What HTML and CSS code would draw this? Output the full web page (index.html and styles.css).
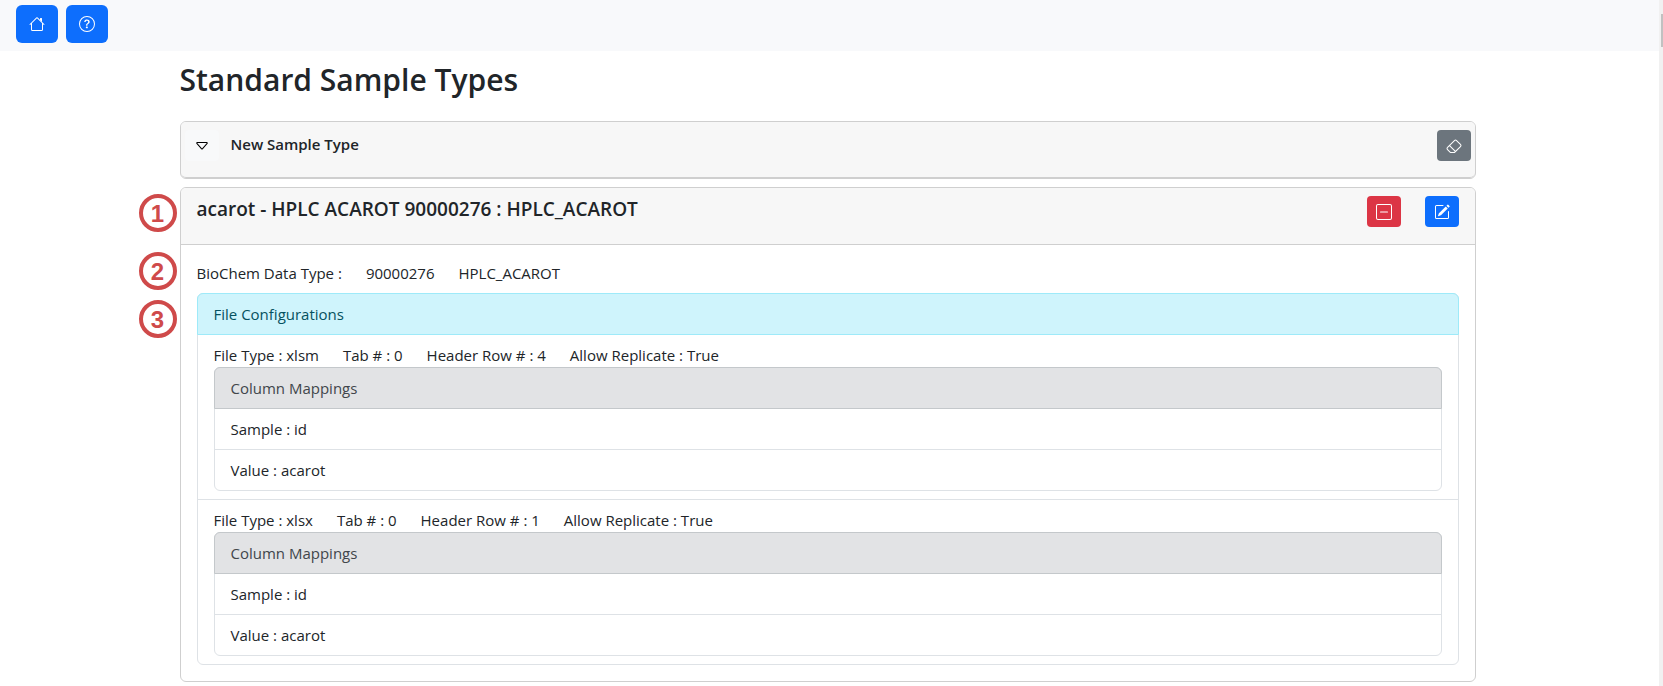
FILE: index.html
```html
<!DOCTYPE html>
<html lang="en">
<head>
<meta charset="utf-8">
<title>Standard Sample Types</title>
<link rel="stylesheet" href="styles.css">
</head>
<body>
<div class="page">
  <nav class="topbar">
    <button class="btn btn-primary" type="button" aria-label="Home">
      <svg class="icon" viewBox="0 0 16 16"><path d="M2 13.5V7h1v6.5a.5.5 0 0 0 .5.5h9a.5.5 0 0 0 .5-.5V7h1v6.5a1.5 1.5 0 0 1-1.5 1.5h-9A1.5 1.5 0 0 1 2 13.5zm11-11V6l-2-2V2.5a.5.5 0 0 1 .5-.5h1a.5.5 0 0 1 .5.5z"/><path d="M7.293 1.5a1 1 0 0 1 1.414 0l6.647 6.646a.5.5 0 0 1-.708.708L8 2.207 1.354 8.854a.5.5 0 1 1-.708-.708L7.293 1.5z"/></svg>
    </button>
    <button class="btn btn-primary" type="button" aria-label="Help">
      <svg class="icon" viewBox="0 0 16 16"><path d="M8 15A7 7 0 1 1 8 1a7 7 0 0 1 0 14zm0 1A8 8 0 1 0 8 0a8 8 0 0 0 0 16z"/><path d="M5.255 5.786a.237.237 0 0 0 .241.247h.825c.138 0 .248-.113.266-.25.09-.656.54-1.134 1.342-1.134.686 0 1.314.343 1.314 1.168 0 .635-.374.927-.965 1.371-.673.489-1.206 1.06-1.168 1.987l.003.217a.25.25 0 0 0 .25.246h.811a.25.25 0 0 0 .25-.25v-.105c0-.718.273-.927 1.01-1.486.609-.463 1.244-.977 1.244-2.056 0-1.511-1.276-2.241-2.673-2.241-1.267 0-2.655.59-2.75 2.286zm1.557 5.763c0 .533.425.927 1.01.927.609 0 1.028-.394 1.028-.927 0-.552-.42-.94-1.029-.94-.584 0-1.009.388-1.009.94z"/></svg>
    </button>
  </nav>

  <main class="container">
    <h2 class="title">Standard Sample Types</h2>

    <section class="card">
      <div class="card-header form-header">
        <button class="btn btn-sm btn-light" type="button" aria-label="Expand">
          <svg class="icon" viewBox="0 0 16 16"><path d="M3.204 5h9.592L8 10.481 3.204 5zm-.753.659 4.796 5.48a1 1 0 0 0 1.506 0l4.796-5.48c.566-.647.106-1.659-.753-1.659H3.204a1 1 0 0 0-.753 1.659z"/></svg>
        </button>
        <h6 class="form-title">New Sample Type</h6>
        <button class="btn btn-sm btn-secondary" type="button" aria-label="Clear">
          <svg class="icon" viewBox="0 0 16 16"><path d="M8.086 2.207a2 2 0 0 1 2.828 0l3.879 3.879a2 2 0 0 1 0 2.828l-5.5 5.5A2 2 0 0 1 7.879 15H5.12a2 2 0 0 1-1.414-.586l-2.5-2.5a2 2 0 0 1 0-2.828l6.879-6.879zm2.121.707a1 1 0 0 0-1.414 0L4.16 7.547l5.293 5.293 4.633-4.633a1 1 0 0 0 0-1.414l-3.879-3.879zM8.746 13.547 3.453 8.254 1.914 9.793a1 1 0 0 0 0 1.414l2.5 2.5a1 1 0 0 0 .707.293H7.88a1 1 0 0 0 .707-.293l.16-.16z"/></svg>
        </button>
      </div>
    </section>

    <section class="card">
      <div class="markers">
        <span class="marker">1</span>
        <span class="marker">2</span>
        <span class="marker">3</span>
      </div>
      <div class="card-header">
        <h5 class="card-title">acarot - HPLC ACAROT 90000276 : HPLC_ACAROT</h5>
        <div class="actions">
          <button class="btn btn-sm btn-danger" type="button" aria-label="Delete">
            <svg class="icon" viewBox="0 0 16 16"><path d="M14 1a1 1 0 0 1 1 1v12a1 1 0 0 1-1 1H2a1 1 0 0 1-1-1V2a1 1 0 0 1 1-1h12zM2 0a2 2 0 0 0-2 2v12a2 2 0 0 0 2 2h12a2 2 0 0 0 2-2V2a2 2 0 0 0-2-2H2z"/><path d="M4 8a.5.5 0 0 1 .5-.5h7a.5.5 0 0 1 0 1h-7A.5.5 0 0 1 4 8z"/></svg>
          </button>
          <button class="btn btn-sm btn-primary" type="button" aria-label="Edit">
            <svg class="icon" viewBox="0 0 16 16"><path d="M15.502 1.94a.5.5 0 0 1 0 .706L14.459 3.69l-2-2L13.502.646a.5.5 0 0 1 .707 0l1.293 1.293zm-1.75 2.456-2-2L4.939 9.21a.5.5 0 0 0-.121.196l-.805 2.414a.25.25 0 0 0 .316.316l2.414-.805a.5.5 0 0 0 .196-.12l6.813-6.814z"/><path fill-rule="evenodd" d="M1 13.5A1.5 1.5 0 0 0 2.5 15h11a1.5 1.5 0 0 0 1.5-1.5v-6a.5.5 0 0 0-1 0v6a.5.5 0 0 1-.5.5h-11a.5.5 0 0 1-.5-.5v-11a.5.5 0 0 1 .5-.5H9a.5.5 0 0 0 0-1H2.5A1.5 1.5 0 0 0 1 2.5v11z"/></svg>
          </button>
        </div>
      </div>
      <div class="card-body">
        <div class="facts">
          <span>BioChem Data Type :</span>
          <span>90000276</span>
          <span>HPLC_ACAROT</span>
        </div>
        <ul class="list">
          <li class="item item-info">File Configurations</li>
          <li class="item">
            <div class="facts">
              <span>File Type : xlsm</span>
              <span>Tab # : 0</span>
              <span>Header Row # : 4</span>
              <span>Allow Replicate : True</span>
            </div>
            <ul class="list">
              <li class="item item-secondary">Column Mappings</li>
              <li class="item">Sample : id</li>
              <li class="item">Value : acarot</li>
            </ul>
          </li>
          <li class="item">
            <div class="facts">
              <span>File Type : xlsx</span>
              <span>Tab # : 0</span>
              <span>Header Row # : 1</span>
              <span>Allow Replicate : True</span>
            </div>
            <ul class="list">
              <li class="item item-secondary">Column Mappings</li>
              <li class="item">Sample : id</li>
              <li class="item">Value : acarot</li>
            </ul>
          </li>
        </ul>
      </div>
    </section>
  </main>
</div>
<div class="scroll-track"><div class="scroll-thumb"></div></div>
</body>
</html>
```
FILE: styles.css
```css
*, *::before, *::after { box-sizing: border-box; }

body {
  display: flex;
  min-height: 100vh;
  margin: 0;
  background: #fff;
  color: #212529;
  font-family: "Segoe UI", "Open Sans", "Noto Sans", sans-serif;
  font-size: 15px;
  line-height: 24px;
}

h2, h5, h6, ul { margin: 0; padding: 0; }

.page { flex: 1; min-width: 0; }

.topbar {
  display: flex;
  gap: 8px;
  padding: 5px 16px 8px;
  background: #f8f9fb;
}

.btn {
  display: flex;
  align-items: center;
  justify-content: center;
  width: 42px;
  height: 38px;
  padding: 0;
  border: 0;
  border-radius: 6px;
  color: #fff;
}
.btn-sm { width: 34px; height: 31px; border-radius: 4px; }
.btn-primary { background: #0d6efd; }
.btn-secondary { background: #6c757d; }
.btn-danger { background: #dc3545; }
.btn-light { background: #f8f9fa; color: #000; }

.icon { width: 16px; height: 16px; fill: currentColor; }

.container {
  display: flex;
  flex-direction: column;
  gap: 8px;
  max-width: 1320px;
  margin: 0 auto;
  padding: 10px 14px 4px 10px;
}

.title {
  margin-bottom: 14px;
  font-size: 30px;
  font-weight: 600;
  line-height: 38px;
}

.card {
  position: relative;
  border: 1px solid #cfcfcf;
  border-radius: 6px;
}

.card-header {
  display: flex;
  align-items: flex-start;
  justify-content: space-between;
  min-height: 57px;
  padding: 8px 16px;
  border-bottom: 1px solid #cfcfcf;
  border-radius: 5px 5px 0 0;
  background: #f7f7f7;
}
.form-header {
  justify-content: flex-start;
  gap: 12px;
  min-height: 56px;
  padding: 8px 4px;
  border-radius: 5px;
}
.form-title {
  flex: 1;
  font-size: 15px;
  font-weight: 600;
  line-height: 28px;
}
.card-title { font-size: 19px; font-weight: 600; line-height: 26px; }
.actions { display: flex; gap: 24px; }
.card-body { padding: 16px; }

.facts { display: flex; gap: 24px; }
.card-body > .facts { margin-bottom: 8px; }

.list {
  border: 1px solid #dee2e6;
  border-radius: 6px;
  list-style: none;
}
.item { padding: 8px 16px; }
.item + .item { border-top: 1px solid #dee2e6; }
.item-info, .item-secondary {
  margin: -1px -1px 0;
  padding: 8px 16px;
  border: 1px solid;
  border-radius: 6px 6px 0 0;
}
.item-info { border-color: #9eeaf9; background: #cff4fc; color: #055160; }
.item-secondary { border-color: #c4c8cb; background: #e2e3e5; color: #41464b; }
.item-info + .item, .item-secondary + .item { border-top: 0; }

.markers {
  position: absolute;
  top: 6px;
  left: -42px;
  display: flex;
  flex-direction: column;
  gap: 10px;
}
.marker {
  width: 38px;
  height: 38px;
  border: 4px solid #cf4a4a;
  border-radius: 50%;
  color: #cf4a4a;
  font-family: "Liberation Sans", Arial, sans-serif;
  font-size: 24px;
  font-weight: 700;
  line-height: 31px;
  text-align: center;
}
.marker:first-child { margin-bottom: 10px; }

.scroll-track { width: 4px; padding: 14px 0 0 2px; background: #f1f1f1; }
.scroll-thumb { height: 33px; background: #c1c1c1; }
```
